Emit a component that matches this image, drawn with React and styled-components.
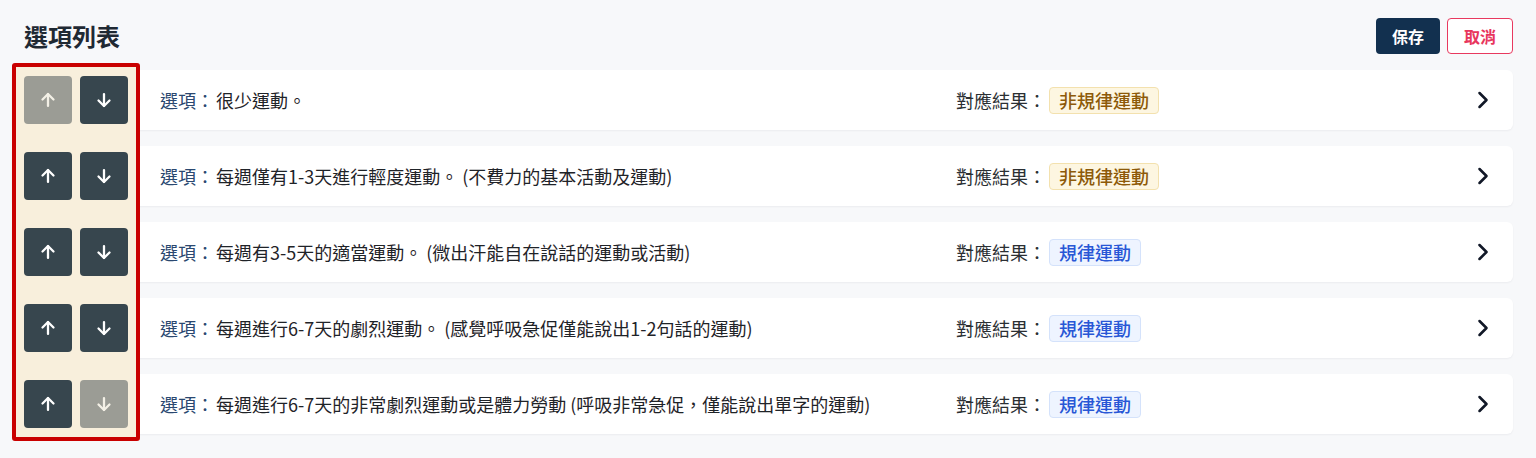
import React from "react";
import styled, { createGlobalStyle } from "styled-components";

const GlobalStyle = createGlobalStyle`
  html, body { margin: 0; padding: 0; background: #f7f8fa; }
  body { font-family: "Noto Sans CJK TC", "Noto Sans", sans-serif; color: #1f2328; }
  * { box-sizing: border-box; }
`;

const Page = styled.div`
  padding: 18px 23px 24px 12px;
`;

const Header = styled.div`
  display: flex;
  align-items: center;
  justify-content: space-between;
  height: 36px;
  padding-left: 12px;
`;

const Title = styled.h1`
  margin: 0;
  font-size: 24px;
  font-weight: 700;
  color: #1f2933;
  line-height: 1;
`;

const Actions = styled.div`
  display: flex;
  gap: 7px;
`;

const ActionButton = styled.button`
  height: 36px;
  padding: 0 16px;
  border-radius: 4px;
  font-family: inherit;
  font-size: 16px;
  font-weight: 700;
  cursor: pointer;
  border: ${(p) => (p.$primary ? "none" : "1px solid #e8395f")};
  background: ${(p) => (p.$primary ? "#12304f" : "#ffffff")};
  color: ${(p) => (p.$primary ? "#ffffff" : "#e8365d")};
`;

const List = styled.div`
  position: relative;
  margin-top: 16px;
  display: flex;
  flex-direction: column;
  gap: 16px;
`;

const Highlight = styled.div`
  position: absolute;
  left: 0;
  top: -7px;
  bottom: -7px;
  width: 128px;
  border: 4px solid #c90000;
  border-radius: 3px;
  background: #f8efdc;
  z-index: 0;
`;

const Row = styled.div`
  display: flex;
  align-items: center;
  height: 60px;
  background: #ffffff;
  border-radius: 6px;
  box-shadow: 0 1px 2px rgba(16, 24, 40, 0.05);
`;

const MoveGroup = styled.div`
  position: relative;
  z-index: 1;
  display: flex;
  gap: 8px;
  padding: 0 12px;
  width: 128px;
`;

const MoveButton = styled.button`
  width: 48px;
  height: 48px;
  border: none;
  border-radius: 4px;
  padding: 0;
  display: flex;
  align-items: center;
  justify-content: center;
  background: ${(p) => (p.disabled ? "#9b9c95" : "#37464e")};
  color: ${(p) => (p.disabled ? "#f3f0e6" : "#ffffff")};
  cursor: ${(p) => (p.disabled ? "default" : "pointer")};
`;

const Content = styled.div`
  flex: 1;
  display: grid;
  grid-template-columns: 1fr 513px 28px;
  align-items: center;
  padding: 0 16px 0 20px;
  font-size: 18px;
`;

const OptionText = styled.div`
  white-space: nowrap;
  color: #1f2328;
`;

const Label = styled.span`
  color: #2a4870;
  margin-right: 2px;
`;

const Result = styled.div`
  display: flex;
  align-items: center;
  color: #2b2f33;
  white-space: nowrap;
`;

const Badge = styled.span`
  margin-left: 3px;
  padding: 2px 9px;
  border-radius: 4px;
  font-weight: 500;
  line-height: 21px;
  border: 1px solid ${(p) => (p.$regular ? "#d4e2fb" : "#f3e1ae")};
  background: ${(p) => (p.$regular ? "#eef4ff" : "#fdf6e1")};
  color: ${(p) => (p.$regular ? "#2857d6" : "#8d5a09")};
`;

const Chevron = styled.svg`
  display: block;
  color: #111827;
`;

const ArrowIcon = ({ down }) => (
  <svg width="22" height="22" viewBox="0 0 24 24" fill="none" stroke="currentColor"
    strokeWidth="2.5" strokeLinecap="round" strokeLinejoin="round"
    style={down ? { transform: "rotate(180deg)" } : undefined}>
    <path d="M12 18.5V5.5" />
    <path d="m6 11.5 6-6 6 6" />
  </svg>
);

const items = [
  { text: "很少運動。", result: "非規律運動", regular: false },
  { text: "每週僅有1-3天進行輕度運動。 (不費力的基本活動及運動)", result: "非規律運動", regular: false },
  { text: "每週有3-5天的適當運動。 (微出汗能自在說話的運動或活動)", result: "規律運動", regular: true },
  { text: "每週進行6-7天的劇烈運動。 (感覺呼吸急促僅能說出1-2句話的運動)", result: "規律運動", regular: true },
  { text: "每週進行6-7天的非常劇烈運動或是體力勞動 (呼吸非常急促，僅能說出單字的運動)", result: "規律運動", regular: true },
];

export default function App() {
  return (
    <>
      <GlobalStyle />
      <Page>
        <Header>
          <Title>選項列表</Title>
          <Actions>
            <ActionButton $primary>保存</ActionButton>
            <ActionButton>取消</ActionButton>
          </Actions>
        </Header>
        <List>
          <Highlight />
          {items.map((it, i) => (
            <Row key={i}>
              <MoveGroup>
                <MoveButton disabled={i === 0}><ArrowIcon /></MoveButton>
                <MoveButton disabled={i === items.length - 1}><ArrowIcon down /></MoveButton>
              </MoveGroup>
              <Content>
                <OptionText><Label>選項：</Label>{it.text}</OptionText>
                <Result>對應結果：<Badge $regular={it.regular}>{it.result}</Badge></Result>
                <Chevron width="28" height="28" viewBox="0 0 24 24" fill="none" stroke="currentColor" strokeWidth="2.2" strokeLinecap="round" strokeLinejoin="round">
                  <path d="m9 18 6-6-6-6" />
                </Chevron>
              </Content>
            </Row>
          ))}
        </List>
      </Page>
    </>
  );
}
